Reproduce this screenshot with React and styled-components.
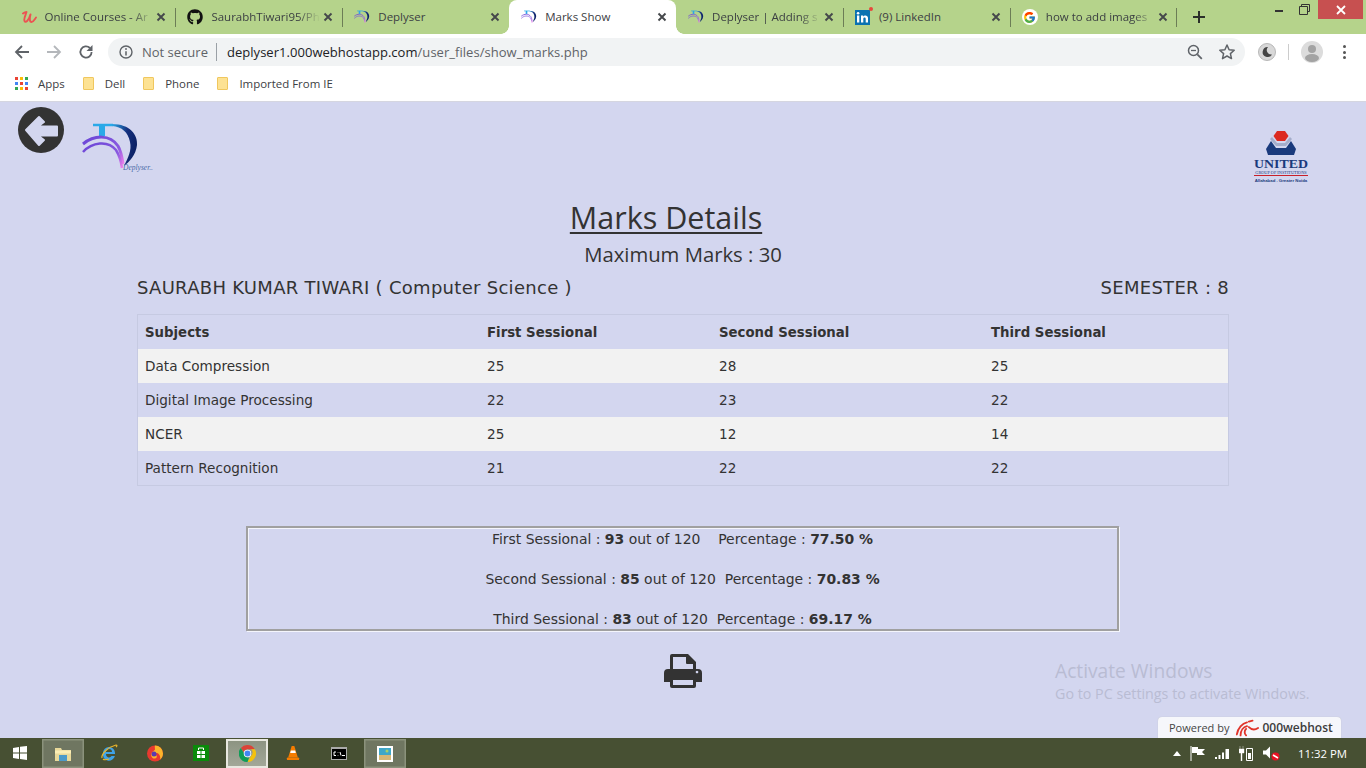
import React from "react";
import styled, { createGlobalStyle } from "styled-components";
import { FaGithub } from "react-icons/fa";
import { FcGoogle } from "react-icons/fc";

const Global = createGlobalStyle`
  html, body { margin: 0; padding: 0; height: 100%; overflow: hidden; }
  body { font-family: "DejaVu Sans", Verdana, sans-serif; color: #333; }
  #root { height: 100%; }
`;

const Shell = styled.div`
  width: 1366px; height: 768px; display: flex; flex-direction: column; overflow: hidden;
`;

/* ---------- tab strip ---------- */
const TabStrip = styled.div`
  height: 34px; flex: none; background: #b5d38b; display: flex; padding-left: 8.5px; position: relative;
  font-family: "Open Sans", sans-serif;
`;
const Tab = styled.div`
  width: 166.9px; height: 34px; box-sizing: border-box; display: flex; align-items: center; flex: none;
  padding: 0 6px 0 12px; position: relative; font-size: 11.5px; color: #3c4043;
  background: ${p => (p.$active ? "#fff" : "transparent")};
  border-radius: ${p => (p.$active ? "8px 8px 0 0" : "0")};
  &::before {
    content: ""; display: ${p => (p.$sep ? "block" : "none")};
    position: absolute; left: 0; top: 8px; height: 19px; width: 1px; background: #6c7d56;
  }
  &::after {
    content: ""; display: ${p => (p.$sepEnd ? "block" : "none")};
    position: absolute; right: 0; top: 8px; height: 19px; width: 1px; background: #6c7d56;
  }
`;
const Flare = styled.i`
  position: absolute; bottom: 0; width: 8px; height: 8px; display: block;
  ${p => (p.$side === "left"
    ? "left: -8px; background: radial-gradient(circle at 0 0, transparent 7.5px, #fff 8px);"
    : "right: -8px; background: radial-gradient(circle at 100% 0, transparent 7.5px, #fff 8px);")}
`;
const TabIcon = styled.span`
  width: 16px; height: 16px; flex: none; display: flex; align-items: center; justify-content: center; margin-right: 8px; position: relative;
`;
const TabTitle = styled.span`
  flex: 1; min-width: 0; white-space: nowrap; margin-bottom: 2px;
  ${p => p.$fade && "-webkit-mask-image: linear-gradient(90deg, #000 80%, transparent 100%);"}
`;
const TabClose = styled.svg`
  width: 16px; height: 16px; flex: none;
`;
const NewTab = styled.svg`
  width: 14px; height: 14px; margin: 10px 0 0 15px; flex: none;
`;
const WindowControls = styled.div`
  position: absolute; right: 3px; top: 0; display: flex; align-items: flex-start; height: 19px;
`;
const WinBtn = styled.div`
  width: ${p => (p.$close ? "45px" : "26px")}; height: 19px; display: flex; align-items: center; justify-content: center;
  background: ${p => (p.$close ? "#c75050" : "transparent")};
`;

/* ---------- toolbar ---------- */
const Toolbar = styled.div`
  height: 34px; flex: none; box-sizing: border-box; padding-top: 2px; background: #fff; display: flex; align-items: center; font-family: "Open Sans", sans-serif;
`;
const NavBtn = styled.span`
  width: 32px; height: 32px; display: flex; align-items: center; justify-content: center; flex: none;
`;
const NavGroup = styled.div`
  display: flex; padding-left: 6px; width: 108px; box-sizing: border-box; flex: none;
`;
const Omnibox = styled.div`
  width: 1137px; height: 28px; background: #f1f3f4; border-radius: 14px; display: flex; align-items: center; flex: none;
  padding: 0 9px 0 11px; box-sizing: border-box; font-size: 13px;
`;
const InfoIcon = styled.svg`
  width: 14px; height: 14px; flex: none;
`;
const NotSecure = styled.span`
  color: #5f6368; margin-left: 9px; font-size: 13px; padding-right: 8px; border-right: 1px solid #9aa0a6; line-height: 18px; white-space: nowrap;
`;
const Url = styled.span`
  margin-left: 10px; color: #5f6368; flex: 1; letter-spacing: 0.04px;
  b { color: #202124; font-weight: 400; }
`;
const OmniIcon = styled.svg`
  width: 18px; height: 18px; flex: none; margin-left: ${p => p.$ml || 0}px;
`;
const ToolRight = styled.div`
  display: flex; align-items: center; flex: 1; padding-left: 13px;
`;
const Moon = styled.div`
  width: 18px; height: 18px; border-radius: 50%; background: #d8d8d8; border: 1px solid #b8b8b8; box-sizing: border-box;
  display: flex; align-items: center; justify-content: center;
`;
const ToolDivider = styled.div`
  width: 1px; height: 16px; background: #ccc; margin: 0 12px 0 12px;
`;
const Avatar = styled.div`
  width: 22px; height: 22px; border-radius: 50%; background: #dcdcdc; overflow: hidden; flex: none;
`;
const Dots = styled.div`
  display: flex; flex-direction: column; gap: 2.2px; margin-left: 20px;
  span { width: 3px; height: 3px; border-radius: 50%; background: #555; display: block; }
`;

/* ---------- bookmarks ---------- */
const Bookmarks = styled.div`
  height: 34px; flex: none; box-sizing: border-box; background: #fff; border-bottom: 1px solid #d5d6e0; padding-bottom: 3px;
  display: flex; align-items: center; padding-left: 15px; font-family: "Open Sans", sans-serif; font-size: 11.45px; color: #3c4043;
`;
const Bookmark = styled.div`
  display: flex; align-items: center; gap: 11px; margin-right: 18px; white-space: nowrap;
`;
const Apps = styled.div`
  display: grid; grid-template-columns: repeat(3, 3px); gap: 2px; width: 13px; flex: none; margin-right: -1px;
`;
const AppDot = styled.i`
  width: 3px; height: 3px; display: block; background: ${p => p.$c};
`;
const Folder = styled.span`
  width: 11px; height: 13px; box-sizing: border-box; flex: none; background: #fde293; border: 1px solid #f0c75e; border-radius: 1px; display: block;
`;

/* ---------- page ---------- */
const Page = styled.main`
  flex: 1; min-height: 0; background: #d3d6ef; position: relative; overflow: hidden; display: flex; flex-direction: column;
`;
const TopRow = styled.div`
  height: 94px; flex: none; display: flex; align-items: flex-start; padding: 5px 57px 0 18px; box-sizing: border-box;
`;
const BackIcon = styled.svg`
  width: 46px; height: 46px; flex: none; display: block;
`;
const DeplyserLogo = styled.svg`
  width: 72px; height: 52px; margin: 15px 0 0 18px; flex: none;
`;
const UnitedLogo = styled.svg`
  width: 56px; height: 54px; margin: 23px 0 0 auto; flex: none;
`;
const Title = styled.h1`
  margin: 0; padding-right: 34px; text-align: center; font: 400 30.5px/42px "Open Sans", sans-serif; color: #333; text-decoration: underline;
  text-decoration-thickness: 1.5px; text-underline-offset: 3px;
`;
const Subtitle = styled.h2`
  margin: 0; text-align: center; font: 400 20.3px/32px "Open Sans", sans-serif; color: #333;
`;
const Content = styled.section`
  width: 1092px; margin-left: 137px; flex: none;
`;
const InfoRow = styled.div`
  display: flex; justify-content: space-between; font-size: 18px; line-height: 34px; color: #333; margin: 1px 0 9px; letter-spacing: 0.29px;
`;
const Table = styled.table`
  width: 1092px; border-collapse: separate; border-spacing: 0; table-layout: fixed; font-size: 13.6px; border: 1px solid #c6cae2;
`;
const Th = styled.th`
  height: 34px; box-sizing: border-box; padding: 0 7px; text-align: left; font-weight: 700; font-size: 13.3px; width: ${p => p.$w}px;
`;
const Row = styled.tr`
  background: ${p => (p.$striped ? "#f2f2f2" : "transparent")};
`;
const Td = styled.td`
  height: 34px; box-sizing: border-box; padding: 0 7px; border: 0;
`;
const Summary = styled.div`
  width: 873px; height: 105px; box-sizing: border-box; margin: 40px 0 0 246px; border: 2px solid #a0a0a0; padding-top: 1px;
  box-shadow: 1px 1px 0 #f4f5fc, inset 1px 1px 0 #f4f5fc; text-align: center; font-size: 13.95px; line-height: 20px; white-space: pre; flex: none;
`;
const SummaryLine = styled.div`
  height: 20px; margin-bottom: 20px;
  &:last-child { margin-bottom: 0; }
`;
const PrintIcon = styled.svg`
  width: 38px; height: 34px; display: block; margin: 23px 0 0 664px; flex: none;
`;
const Watermark = styled.div`
  position: absolute; left: 1055px; top: 556px; font-family: "Open Sans", sans-serif; color: #b9bcd3;
`;
const WmTitle = styled.div`
  font-size: 19.2px; line-height: 26px;
`;
const WmSub = styled.div`
  font-size: 14.3px; line-height: 19px;
`;
const Powered = styled.div`
  position: absolute; left: 1158px; bottom: 0; width: 183px; height: 21px; box-sizing: border-box; background: #f6f7fb; border-radius: 4px 4px 0 0;
  box-shadow: 0 0 1px #bbb; display: flex; align-items: center; padding-left: 11px; font-family: "Open Sans", sans-serif; font-size: 11px; color: #444; white-space: nowrap;
`;
const PoweredBrand = styled.span`
  font-size: 12px; font-weight: 600; color: #3c3c3c; margin-left: 3px;
`;

/* ---------- taskbar ---------- */
const Taskbar = styled.footer`
  height: 30px; flex: none; background: #475033; display: flex; align-items: stretch; font-family: "Open Sans", sans-serif;
`;
const StartBtn = styled.div`
  width: 40px; display: flex; align-items: center; justify-content: center; flex: none;
`;
const TaskSlot = styled.div`
  width: 46px; flex: none; box-sizing: border-box; display: flex; align-items: center; justify-content: center;
  ${p => p.$open && "background: #6f7661; background-clip: content-box; border: 2px solid transparent; box-shadow: inset 0 0 0 1.5px #8b927c; border-width: 1px 2px 0;"}
  ${p => p.$active && "background: linear-gradient(#8b9280, #a4a99a); background-clip: content-box; border: 1px solid transparent; border-width: 1px 2px 0; box-shadow: inset 0 0 0 2px #e8e8e0;"}
`;
const Tray = styled.div`
  margin-left: auto; display: flex; align-items: center; gap: 9px; padding-right: 19px;
`;
const Clock = styled.span`
  color: #fff; font-size: 11.4px; margin-left: 9px;
`;
const RedDot = styled.i`
  position: absolute; right: -2px; top: -2px; width: 4px; height: 4px; border-radius: 50%; background: #e8483c; display: block;
`;
const GoogleBadge = styled.span`
  width: 16px; height: 16px; border-radius: 50%; background: #fff; display: flex; align-items: center; justify-content: center;
`;

/* ---------- drawn icons ---------- */
const MarkShapes = () => (
  <>
    <defs>
      <linearGradient id="dCurve" x1="0" y1="0" x2="1" y2="0.3">
        <stop offset="0" stopColor="#2aa9e8" />
        <stop offset="0.6" stopColor="#15307e" />
        <stop offset="1" stopColor="#0c2266" />
      </linearGradient>
      <linearGradient id="dArc" x1="0" y1="0" x2="1" y2="1">
        <stop offset="0" stopColor="#6a45d6" />
        <stop offset="0.65" stopColor="#8a5ae0" />
        <stop offset="1" stopColor="#ee80ea" />
      </linearGradient>
    </defs>
    <path d="M11 3h20" stroke="#2aa9e8" strokeWidth="2.500" fill="none" />
    <path d="M20 3v11" stroke="#2aa9e8" strokeWidth="6" fill="none" />
    <path d="M30 2C48 2 56 13 55 23 54 33 47 40 42 44 46 36 50 28 48 20 46 10 40 5 30 4z" fill="url(#dCurve)" />
    <path d="M1 22C12 13 28 12 36 24 39 29 40 35 41 42" stroke="url(#dArc)" strokeWidth="3" fill="none" />
    <path d="M1 30C10 20 26 18 34 28 37 33 39 38 40 46" stroke="url(#dArc)" strokeWidth="2.500" fill="none" />
  </>
);

const DeplyserMark = () => (
  <svg width="16" height="16" viewBox="0 0 58 50"><MarkShapes /></svg>
);

const Close = () => (
  <TabClose viewBox="0 0 16 16">
    <path d="M4.500 4.500l7 7M11.500 4.500l-7 7" stroke="#45484b" strokeWidth="1.900" fill="none" />
  </TabClose>
);

const UdemyMark = () => (
  <svg width="16" height="16" viewBox="0 0 16 16">
    <path d="M2 4.500Q4 3 5.500 3C4.500 6 2.500 10 3.500 12 4.500 14 7.500 12 9.500 5.500 8.500 9 8.500 13 10.500 13 12.500 13 13.500 10.500 15 8.500" fill="none" stroke="#ec5252" strokeWidth="1.900" strokeLinecap="round" strokeLinejoin="round" />
  </svg>
);

const LinkedInMark = () => (
  <>
    <svg width="15" height="15" viewBox="0 0 15 15">
      <rect width="15" height="15" fill="#0a72b1" />
      <rect x="2" y="5.500" width="2.300" height="7" fill="#fff" />
      <circle cx="3.100" cy="3.300" r="1.300" fill="#fff" />
      <path d="M6 5.500h2.200v1c1-1.600 4.800-1.800 4.800 1.600v4.400h-2.300V8.800c0-1.800-2.400-1.700-2.400 0v3.700H6z" fill="#fff" />
    </svg>
    <RedDot />
  </>
);

const tabs = [
  { icon: <UdemyMark />, title: "Online Courses - Ar", fade: true },
  { icon: <FaGithub size={16} color="#111" />, title: "SaurabhTiwari95/Ph", fade: true, sep: true },
  { icon: <DeplyserMark />, title: "Deplyser", sep: true },
  { icon: <DeplyserMark />, title: "Marks Show", active: true },
  { icon: <DeplyserMark />, title: "Deplyser | Adding s", fade: true },
  { icon: <LinkedInMark />, title: "(9) LinkedIn", sep: true },
  { icon: <GoogleBadge><FcGoogle size={13} /></GoogleBadge>, title: "how to add images", fade: true, sep: true, sepEnd: true },
];

const appColors = ["#ea4335", "#fbbc05", "#34a853", "#4285f4", "#ea4335", "#4285f4", "#34a853", "#fbbc05", "#ea4335"];

const subjects = [
  ["Data Compression", 25, 28, 25],
  ["Digital Image Processing", 22, 23, 22],
  ["NCER", 25, 12, 14],
  ["Pattern Recognition", 21, 22, 22],
];

const columns = [
  ["Subjects", 342],
  ["First Sessional", 232],
  ["Second Sessional", 272],
  ["Third Sessional", 244],
];

const summary = [
  ["First Sessional", 93, "\u00a0\u00a0\u00a0\u00a0", "77.50"],
  ["Second Sessional", 85, "\u00a0\u00a0", "70.83"],
  ["Third Sessional", 83, "\u00a0\u00a0", "69.17"],
];

export default function App() {
  return (
    <Shell>
      <Global />
      <TabStrip>
        {tabs.map(t => (
          <Tab key={t.title} $active={t.active} $sep={t.sep} $sepEnd={t.sepEnd}>
            {t.active && <Flare $side="left" />}
            {t.active && <Flare $side="right" />}
            <TabIcon>{t.icon}</TabIcon>
            <TabTitle $fade={t.fade}>{t.title}</TabTitle>
            <Close />
          </Tab>
        ))}
        <NewTab viewBox="0 0 14 14">
          <path d="M7 1v12M1 7h12" stroke="#2b2f2a" strokeWidth="2" />
        </NewTab>
        <WindowControls>
          <WinBtn>
            <svg width="10" height="10" viewBox="0 0 10 10"><path d="M1 6h8" stroke="#333" strokeWidth="2" /></svg>
          </WinBtn>
          <WinBtn>
            <svg width="11" height="11" viewBox="0 0 11 11" style={{ marginRight: 2 }}><path d="M2.500 2.500V.5h8v7h-2M.5 2.500h8v8h-8z" stroke="#333" fill="none" /></svg>
          </WinBtn>
          <WinBtn $close>
            <svg width="10" height="10" viewBox="0 0 10 10"><path d="M1 1l8 8M9 1l-8 8" stroke="#fff" strokeWidth="1.800" /></svg>
          </WinBtn>
        </WindowControls>
      </TabStrip>

      <Toolbar>
        <NavGroup>
          <NavBtn>
            <svg width="16" height="16" viewBox="0 0 16 16"><path d="M15 8H2M8 2L2 8l6 6" fill="none" stroke="#5f6368" strokeWidth="1.800" /></svg>
          </NavBtn>
          <NavBtn>
            <svg width="16" height="16" viewBox="0 0 16 16"><path d="M1 8h13M8 2l6 6-6 6" fill="none" stroke="#b4b7bb" strokeWidth="1.800" /></svg>
          </NavBtn>
          <NavBtn>
            <svg width="16" height="16" viewBox="0 0 16 16"><path d="M13.600 8a5.600 5.600 0 1 1-1.700-4" fill="none" stroke="#5f6368" strokeWidth="1.800" /><path d="M14.500 1v6h-6z" fill="#5f6368" /></svg>
          </NavBtn>
        </NavGroup>
        <Omnibox>
          <InfoIcon viewBox="0 0 18 18">
            <circle cx="9" cy="9" r="7.700" fill="none" stroke="#5f6368" strokeWidth="1.800" />
            <path d="M9 8v5.500" stroke="#5f6368" strokeWidth="2" />
            <circle cx="9" cy="5.200" r="1.200" fill="#5f6368" />
          </InfoIcon>
          <NotSecure>Not secure</NotSecure>
          <Url><b>deplyser1.000webhostapp.com</b>/user_files/show_marks.php</Url>
          <OmniIcon viewBox="0 0 18 18">
            <circle cx="7.500" cy="7.500" r="5" fill="none" stroke="#5f6368" strokeWidth="1.500" />
            <path d="M11.300 11.300l4.500 4.500" stroke="#5f6368" strokeWidth="1.800" />
            <path d="M5 7.500h5" stroke="#5f6368" strokeWidth="1.300" />
          </OmniIcon>
          <OmniIcon viewBox="0 0 18 18" $ml={14}>
            <path d="M9 2l2.100 4.700 5.100.5-3.800 3.400 1.100 5L9 13l-4.500 2.600 1.100-5L1.800 7.200l5.100-.5z" fill="none" stroke="#5f6368" strokeWidth="1.500" strokeLinejoin="round" />
          </OmniIcon>
        </Omnibox>
        <ToolRight>
          <Moon>
            <svg width="12" height="12" viewBox="0 0 12 12"><path d="M7 1a5 5 0 1 0 4 7.500A4.500 4.500 0 0 1 7 1z" fill="#444" /></svg>
          </Moon>
          <ToolDivider />
          <Avatar>
            <svg width="22" height="22" viewBox="0 0 22 22">
              <circle cx="11" cy="8" r="4" fill="#a3a3a3" />
              <ellipse cx="11" cy="17" rx="7" ry="4" fill="#a3a3a3" />
            </svg>
          </Avatar>
          <Dots><span /><span /><span /></Dots>
        </ToolRight>
      </Toolbar>

      <Bookmarks>
        <Bookmark>
          <Apps>{appColors.map((c, i) => <AppDot key={i} $c={c} />)}</Apps>
          Apps
        </Bookmark>
        <Bookmark><Folder />Dell</Bookmark>
        <Bookmark><Folder />Phone</Bookmark>
        <Bookmark><Folder />Imported From IE</Bookmark>
      </Bookmarks>

      <Page>
        <TopRow>
          <BackIcon viewBox="0 0 46 46">
            <circle cx="23" cy="23" r="23" fill="#333" />
            <path d="M8 23L21 10l5 5-6 4.500h19v9H20l6 4.500-5 5z" fill="#d3d6ef" stroke="#d3d6ef" strokeWidth="2" strokeLinejoin="round" />
          </BackIcon>
          <DeplyserLogo viewBox="0 0 72 52">
            <MarkShapes />
            <text x="41" y="48" fontFamily="Liberation Serif, serif" fontStyle="italic" fontSize="7.500" fill="#4a6aa8">Deplyser..</text>
          </DeplyserLogo>
          <UnitedLogo viewBox="0 0 56 54">
            <path d="M24 1h8l3.500 5-3.500 5h-8l-3.500-5z" fill="#dc2a20" />
            <path d="M19 7l5 6h8l5-6 2 2-6 7H23l-6-7z" fill="#a4adcb" />
            <path d="M18 11l5 7h10l5-7 5 8-2 6H15l-2-6z" fill="#1a3a7c" />
            <text x="1" y="38" fontFamily="Liberation Serif, serif" fontWeight="700" fontSize="13.500" fill="#1a3a7c" textLength="54" lengthAdjust="spacingAndGlyphs">UNITED</text>
            <text x="28" y="43.500" textAnchor="middle" fontFamily="Liberation Serif, serif" fontSize="4.300" fill="#1a3a7c">GROUP OF INSTITUTIONS</text>
            <rect x="1" y="45" width="54" height="1" fill="#c8202a" />
            <text x="28" y="51.500" textAnchor="middle" fontFamily="Liberation Sans, sans-serif" fontWeight="700" fontSize="4.300" fill="#1a3a7c">Allahabad . Greater Noida</text>
          </UnitedLogo>
        </TopRow>
        <Title>Marks Details</Title>
        <Subtitle>Maximum Marks : 30</Subtitle>
        <Content>
          <InfoRow>
            <span>SAURABH KUMAR TIWARI ( Computer Science )</span>
            <span>SEMESTER : 8</span>
          </InfoRow>
          <Table>
            <thead>
              <tr>{columns.map(([c, w]) => <Th key={c} $w={w}>{c}</Th>)}</tr>
            </thead>
            <tbody>
              {subjects.map((r, i) => (
                <Row key={r[0]} $striped={i % 2 === 0}>
                  {r.map((v, j) => <Td key={j}>{v}</Td>)}
                </Row>
              ))}
            </tbody>
          </Table>
        </Content>
        <Summary>
          {summary.map(([name, n, gap, pct]) => (
            <SummaryLine key={name}>
              {name} : <b>{n}</b> out of 120{gap}Percentage : <b>{pct} %</b>
            </SummaryLine>
          ))}
        </Summary>
        <PrintIcon viewBox="0 0 38 34">
          <path fillRule="evenodd" fill="#333" d="M8 0H24L32 8V15H34Q38 15 38 19V28H32V32Q32 34 30 34H8Q6 34 6 32V28H0V19Q0 15 4 15H6V2Q6 0 8 0ZM9 3V15H29V10H23Q22 10 22 9V3ZM9 26V31H29V26ZM33 16.700a1.300 1.300 0 1 0 .01 0Z" />
        </PrintIcon>
        <Watermark>
          <WmTitle>Activate Windows</WmTitle>
          <WmSub>Go to PC settings to activate Windows.</WmSub>
        </Watermark>
        <Powered>
          Powered by
          <svg width="24" height="18" viewBox="0 0 26 18" style={{ marginLeft: 6 }}>
            <path d="M2 16C3 9 8 4 13 3M6 17c0-5 3-9 7-10M12 17c-2-2-2-5 0-7M15 8c3 3 7 3 10 1M15 2l4-1" fill="none" stroke="#e0352b" strokeWidth="2" strokeLinecap="round" />
          </svg>
          <PoweredBrand>000webhost</PoweredBrand>
        </Powered>
      </Page>

      <Taskbar>
        <StartBtn>
          <svg width="14" height="14" viewBox="0 0 14 14">
            <path d="M0 2l6-1v5.500H0zM7 .8L14 0v6.500H7zM0 7.500h6V13l-6-1zM7 7.500h7V14l-7-1z" fill="#fff" />
          </svg>
        </StartBtn>
        <TaskSlot $open>
          <svg width="18" height="17" viewBox="0 0 18 17">
            <path d="M1 3h6l1 2h9v11H1z" fill="#e9d99a" />
            <rect x="1" y="5.500" width="16" height="3" fill="#fbeeb5" />
            <rect x="5" y="10" width="8" height="6" fill="#4c9ac9" />
          </svg>
        </TaskSlot>
        <TaskSlot>
          <svg width="18" height="18" viewBox="0 0 18 18">
            <path d="M3 9a6 6 0 0 1 12 0v1H6a3 3 0 0 0 5.500 2h3.400A6 6 0 0 1 3 9zm3-1h6a3 3 0 0 0-6 0z" fill="#3fa3e8" />
            <path d="M2 14C1 10 8 3 16 1c1 0 1.500 1 0 2M3 15c1 1 3 1 6 0" fill="none" stroke="#e9b52c" strokeWidth="1.200" />
          </svg>
        </TaskSlot>
        <TaskSlot>
          <svg width="18" height="18" viewBox="0 0 18 18">
            <circle cx="9" cy="9.500" r="8" fill="#e8392f" />
            <path d="M9 1.500a8 8 0 0 1 8 8c0 3-1.500 5-3 6 1-3-1-6-3-6.500-2 0-3 1-3 2 3-1 4 3 1 3.500-3 .5-5-3-3-6 1-1.500 3-2.500 3-3C9 4 8.500 2.500 9 1.500z" fill="#fbb42b" />
            <circle cx="8" cy="10" r="2.500" fill="#5b3bb0" />
          </svg>
        </TaskSlot>
        <TaskSlot>
          <svg width="16" height="16" viewBox="0 0 16 16">
            <rect width="16" height="16" fill="#0a8a0a" />
            <path d="M4 6h8v7H4z" fill="#fff" />
            <path d="M5.500 5V3h5v2" fill="none" stroke="#fff" />
            <path d="M8 6v7M4 9.500h8" stroke="#0a8a0a" />
          </svg>
        </TaskSlot>
        <TaskSlot $active>
          <svg width="17" height="17" viewBox="0 0 32 32">
            <path d="M16 0a16 16 0 0 1 13.900 8H16a8 8 0 0 0-7.500 5.200L3.500 5.500A16 16 0 0 1 16 0z" fill="#db4437" />
            <path d="M29.900 8a16 16 0 0 1-13.900 24l7-12a8 8 0 0 0 0-12z" fill="#f4c20d" />
            <path d="M3.500 5.500L10 17a8 8 0 0 0 9 6.500L16 32A16 16 0 0 1 3.500 5.500z" fill="#0f9d58" />
            <circle cx="16" cy="16" r="7" fill="#fff" />
            <circle cx="16" cy="16" r="5.500" fill="#4285f4" />
          </svg>
        </TaskSlot>
        <TaskSlot>
          <svg width="14" height="16" viewBox="0 0 16 18">
            <path d="M6.500 1h3l4 13h-11z" fill="#f57c00" />
            <path d="M5.500 6h5l.7 3H4.800z" fill="#fff" />
            <rect x="1" y="14" width="14" height="3" rx="1" fill="#f57c00" />
          </svg>
        </TaskSlot>
        <TaskSlot>
          <svg width="16" height="13" viewBox="0 0 16 13">
            <rect width="16" height="13" fill="#aaa" />
            <rect x="1" y="2" width="14" height="10" fill="#000" />
            <path d="M5 5H3v3.500h2M7 5v.5M7 8v.5M9 5l1 3.500M11 8.500h3" stroke="#fff" fill="none" />
          </svg>
        </TaskSlot>
        <TaskSlot $open>
          <svg width="16" height="16" viewBox="0 0 16 16">
            <rect width="16" height="16" fill="#fff" />
            <rect x="2" y="2" width="12" height="7" fill="#3fa7c9" />
            <rect x="2" y="9" width="12" height="5" fill="#d6b676" />
            <circle cx="10" cy="5" r="1.500" fill="#a7d068" />
          </svg>
        </TaskSlot>
        <Tray>
          <svg width="8" height="5" viewBox="0 0 8 5"><path d="M0 5l4-5 4 5z" fill="#fff" /></svg>
          <svg width="16" height="15" viewBox="0 0 16 15"><path d="M1 0v15" stroke="#fff" /><path d="M2 1h6v2l7 0-3 3 3 3H7V7H2z" fill="#fff" /></svg>
          <svg width="15" height="12" viewBox="0 0 15 12"><path d="M0 10h2v2H0zM3.500 8h2v4h-2zM7 5.500h2V12H7zM10.500 2H14v10h-3.500z" fill="#fff" /></svg>
          <svg width="15" height="15" viewBox="0 0 15 15"><path d="M1 0v3M4 0v3M0 3h5v4H3v8H2V7H0z" fill="#fff" stroke="#fff" strokeWidth=".4" /><path d="M7.500 2.500h6v12h-6z" fill="none" stroke="#fff" /><rect x="9" y="7" width="3" height="6" fill="#fff" /></svg>
          <svg width="17" height="15" viewBox="0 0 17 15"><path d="M0 4.500h3l4-4v12L3 8.500H0z" fill="#fff" /><circle cx="12.500" cy="10.500" r="4" fill="#e81123" /><path d="M10 9l5 3" stroke="#fff" strokeWidth="1.500" /></svg>
          <Clock>11:32 PM</Clock>
        </Tray>
      </Taskbar>
    </Shell>
  );
}
